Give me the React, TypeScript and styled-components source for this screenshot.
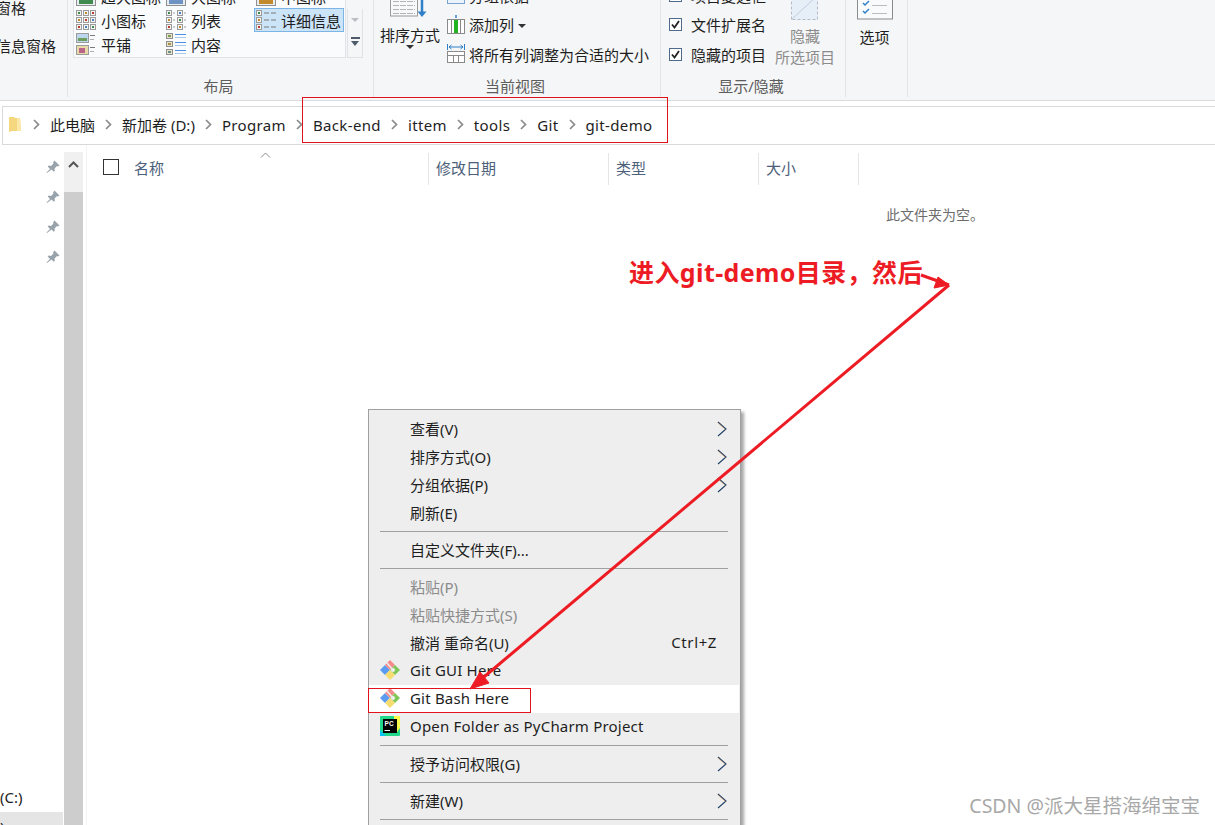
import styled, { createGlobalStyle } from 'styled-components';

const FONT = '"Noto Sans", "Noto Sans CJK SC", sans-serif';

const GlobalStyle = createGlobalStyle`
  html, body {
    margin: 0;
    padding: 0;
    background: #fff;
    overflow: hidden;
  }
  * {
    box-sizing: border-box;
  }
`;

const Thumb = ({ x, y, c = '#c0392b' }: { x: number; y: number; c?: string }) => (
  <>
    <rect x={x + 0.5} y={y + 0.5} width={5} height={5} fill="#f4f4f4" stroke="#9b9b9b" />
    <rect x={x + 2} y={y + 2} width={2} height={2} fill={c} />
  </>
);

const SmallIcon = () => (
  <svg width="20" height="20" viewBox="0 0 20 20">
    {[0, 7, 14].map((y, r) =>
      [0, 7, 14].map((x, i) => (
        <Thumb key={`${x}-${y}`} x={x} y={y} c={['#3d8a4a', '#c28a2c', '#c0392b', '#4a7fbf'][(r + i) % 4]} />
      )),
    )}
  </svg>
);

const ListIcon = () => (
  <svg width="20" height="20" viewBox="0 0 20 20">
    {[0, 7, 14].map((y, i) => (
      <g key={y}>
        <Thumb x={0} y={y} c={['#3d8a4a', '#c28a2c', '#c0392b'][i]} />
        <line x1="7" x2="9" y1={y + 3} y2={y + 3} stroke="#9b9b9b" />
        <Thumb x={11} y={y} c={['#4a7fbf', '#3d8a4a', '#c28a2c'][i]} />
        <line x1="18" x2="20" y1={y + 3} y2={y + 3} stroke="#9b9b9b" />
      </g>
    ))}
  </svg>
);

const DetailIcon = () => (
  <svg width="20" height="20" viewBox="0 0 20 20">
    {[0, 7, 14].map((y, i) => (
      <g key={y}>
        <Thumb x={0} y={y} c={['#3d8a4a', '#c28a2c', '#c0392b'][i]} />
        <line x1="8" x2="13" y1={y + 3} y2={y + 3} stroke="#7a7a7a" />
        <line x1="15" x2="20" y1={y + 3} y2={y + 3} stroke="#7a7a7a" />
      </g>
    ))}
  </svg>
);

const TileIcon = () => (
  <svg width="20" height="22" viewBox="0 0 20 22">
    <rect x="0.5" y="0.5" width="12" height="9" fill="#bcd6ee" stroke="#9b9b9b" />
    <rect x="2" y="5" width="9" height="3" fill="#6d9e5a" />
    <line x1="14" x2="19" y1="2.5" y2="2.5" stroke="#7a7a7a" />
    <line x1="14" x2="18" y1="6.5" y2="6.5" stroke="#b0b0b0" />
    <rect x="0.5" y="12.5" width="12" height="9" fill="#e8d9a8" stroke="#9b9b9b" />
    <rect x="3" y="15" width="6" height="5" fill="#b9658a" />
    <line x1="14" x2="19" y1="14.5" y2="14.5" stroke="#7a7a7a" />
    <line x1="14" x2="18" y1="18.5" y2="18.5" stroke="#b0b0b0" />
  </svg>
);

const ContentIcon = () => (
  <svg width="20" height="22" viewBox="0 0 20 22">
    {[0, 8, 16].map((y, i) => (
      <g key={y}>
        <rect x="0.5" y={y + 0.5} width="6" height="5" fill="#e9e5c9" stroke="#8f8f8f" />
        <rect x="2" y={y + 2} width="3" height="2" fill={['#7d9a5a', '#a88f4a', '#6a8f8a'][i]} />
        <line x1="9" x2="20" y1={y + 1.5} y2={y + 1.5} stroke="#4a90e2" />
        <line x1="9" x2="20" y1={y + 4.5} y2={y + 4.5} stroke="#a9c8ee" />
      </g>
    ))}
  </svg>
);

const ClippedPicture = ({ tone }: { tone: string }) => (
  <svg width="20" height="20" viewBox="0 0 20 20">
    <rect x="0.5" y="0.5" width="19" height="19" fill="#e8edf3" stroke="#8f8f8f" />
    <rect x="3" y="2" width="14" height="16" fill={tone} />
  </svg>
);

const AddColumnIcon = () => (
  <svg width="18" height="20" viewBox="0 0 18 20">
    <path d="M9 0v3" stroke="#2f7fc9" strokeWidth="1.5" />
    <rect x="0.5" y="4.5" width="17" height="14" fill="#fff" stroke="#8a8a8a" />
    <rect x="7" y="5" width="4" height="13" fill="#22b322" />
    <line x1="4.5" x2="4.5" y1="5" y2="18" stroke="#8a8a8a" />
    <line x1="13.5" x2="13.5" y1="5" y2="18" stroke="#8a8a8a" />
  </svg>
);

const FitColumnsIcon = () => (
  <svg width="18" height="20" viewBox="0 0 18 20">
    <path d="M2 3h14M2 3l2.500-2M2 3l2.500 2M16 3l-2.500-2M16 3l-2.500 2" stroke="#2f7fc9" fill="none" />
    <line x1="0.500" x2="0.500" y1="0" y2="6" stroke="#2f7fc9" />
    <line x1="17.500" x2="17.500" y1="0" y2="6" stroke="#2f7fc9" />
    <rect x="0.500" y="7.500" width="17" height="11" fill="#fff" stroke="#8a8a8a" />
    <line x1="0" x2="18" y1="11.500" y2="11.500" stroke="#8a8a8a" />
    <path d="M6.500 12v7M11.500 12v7" stroke="#8a8a8a" />
  </svg>
);

const GroupByIcon = () => (
  <svg width="18" height="20" viewBox="0 0 18 20">
    <rect x="0.500" y="4.500" width="17" height="14" fill="#eaf2fb" stroke="#7aa3d0" />
    <line x1="3" x2="15" y1="9.500" y2="9.500" stroke="#9a9a9a" />
    <line x1="3" x2="15" y1="13.500" y2="13.500" stroke="#9a9a9a" />
  </svg>
);

const SortIcon = () => (
  <svg width="40" height="26" viewBox="0 0 40 26">
    <rect x="0.500" y="0" width="27" height="22" fill="#f7f8f9" stroke="#9a9a9a" />
    {[3, 7, 11, 15, 19].map(y => (
      <line key={y} x1="3" x2="25" y1={y + 0.500} y2={y + 0.500} stroke="#b5b5b5" strokeDasharray="6 1" />
    ))}
    <path d="M32 0v19" stroke="#2f7fc9" strokeWidth="2.500" />
    <path d="M27.500 17.500h9L32 23z" fill="#2f7fc9" />
  </svg>
);

const HideIcon = () => (
  <svg width="28" height="24" viewBox="0 0 28 24">
    <path d="M0.500 23.500V0h26v23.500z" fill="#e6eef8" stroke="#b4bcc8" strokeDasharray="3 2" />
    <path d="M1 23L26 0" stroke="#c0cde0" />
  </svg>
);

const OptionsIcon = () => (
  <svg width="36" height="20" viewBox="0 0 36 20">
    <rect x="0.500" y="-4" width="35" height="23" fill="#f9fafb" stroke="#8a8a8a" />
    <path d="M6 3l2 2 4-4M6 11l2 2 4-4" stroke="#2f7fc9" strokeWidth="1.500" fill="none" />
    <line x1="15" x2="30" y1="5.500" y2="5.500" stroke="#bcbcbc" />
    <line x1="15" x2="30" y1="13.500" y2="13.500" stroke="#bcbcbc" />
  </svg>
);

const FolderIcon = () => (
  <svg width="13" height="16" viewBox="0 0 13 16">
    <path d="M0 0h5l1 1h5l1 13H3l-3 1z" fill="#f5d77f" />
    <path d="M8 1h3l1 13H8z" fill="#fbe7a6" />
  </svg>
);

const Crumb = () => (
  <svg width="7" height="11" viewBox="0 0 7 11">
    <path d="M1 1l4.500 4.500L1 10" stroke="#8a8a8a" strokeWidth="1.700" fill="none" />
  </svg>
);

const Pin = () => (
  <svg width="14" height="14" viewBox="0 0 14 14">
    <path d="M8.500 0.500l5 5-1.500 1-1-.5-2.500 2.500.3 2.300-1 1-2.300-2.300L1 13l-.5-.5 3.500-3.600L1.700 6.600l1-1 2.300.3 2.500-2.500-.5-1z" fill="#98a2ab" />
  </svg>
);

const MenuChevron = () => (
  <svg width="10" height="16" viewBox="0 0 10 16">
    <path d="M1 1l8 7-8 7" stroke="#1f3f66" strokeWidth="1.100" fill="none" />
    <path d="M0.500 1.500l8 7" stroke="#d98a3a" strokeWidth="0.500" fill="none" />
  </svg>
);

const GitIcon = () => (
  <svg width="20" height="20" viewBox="0 0 20 20">
    <path d="M0 10l5-5 5 5-5 5z" fill="#5b9bf0" />
    <path d="M5 5l5-5 5 5-5 5z" fill="#f58a8a" />
    <path d="M10 10l5-5 5 5-5 5z" fill="#7fc857" />
    <path d="M5 15l5-5 5 5-5 5z" fill="#f7dc6f" />
    <path d="M7 3l6 7" stroke="#eeeeee" strokeWidth="1.500" />
    <circle cx="13" cy="10" r="2" fill="#eeeeee" />
  </svg>
);

const PyCharmIcon = () => (
  <svg width="20" height="20" viewBox="0 0 20 20">
    <rect x="0" y="0" width="20" height="20" rx="1" fill="#21d789" />
    <path d="M14 0h6v12l-3 4-3-4z" fill="#fcf84a" />
    <path d="M0 14l6 6H0z" fill="#07c3f2" />
    <rect x="3" y="3" width="14" height="14" fill="#000" />
    <text x="4.500" y="10" fontSize="6.500" fontWeight="700" fill="#fff" fontFamily="Liberation Sans, sans-serif">
      PC
    </text>
    <line x1="4.500" x2="10" y1="14.500" y2="14.500" stroke="#fff" />
  </svg>
);

const Page = styled.div`
  position: relative;
  display: flex;
  flex-direction: column;
  width: 1215px;
  height: 825px;
  overflow: hidden;
  background: #fff;
  color: #1e1e1e;
  font-family: ${FONT};
  font-size: 15px;
`;

const Ribbon = styled.div`
  display: flex;
  flex: none;
  height: 101px;
  padding-bottom: 3px;
  background: #f5f6f7;
  border-bottom: 1px solid #dadbdc;
`;

const Group = styled.div<{ $width: number }>`
  display: flex;
  flex-direction: column;
  flex: none;
  width: ${p => p.$width}px;
  border-right: 1px solid #e2e3e5;
`;

const GroupBody = styled.div`
  display: flex;
  flex: 1;
  min-height: 0;
  align-items: flex-end;
  overflow: hidden;
`;

const GroupLabel = styled.div`
  flex: none;
  height: 22px;
  line-height: 22px;
  padding-right: 4px;
  text-align: center;
  color: #5d5d5d;
`;

const PaneColumn = styled.div`
  display: flex;
  flex-direction: column;
  align-items: flex-end;
  width: 56px;
  margin-bottom: 19px;
  gap: 19px;
  white-space: nowrap;
  line-height: 19px;
`;

const PaneTop = styled.span`
  margin-right: 30px;
`;

const Gallery = styled.div`
  display: flex;
  margin: 0 0 17px 5px;
`;

const GalleryGrid = styled.div`
  display: grid;
  grid-template-columns: repeat(3, 90px);
  grid-auto-rows: 24px;
  width: 273px;
  padding-bottom: 1px;
  background: #f9fbfd;
  border: 1px solid #dfe3e8;
  border-top: 0;
`;

const GalleryItem = styled.div<{ $selected?: boolean }>`
  display: flex;
  align-items: center;
  gap: 5px;
  padding-left: 2px;
  white-space: nowrap;
  background: ${p => (p.$selected ? '#cce4f7' : 'transparent')};
  outline: ${p => (p.$selected ? '1px solid #7db4e6' : 'none')};
  outline-offset: -1px;
`;

const GalleryScroll = styled.div`
  display: flex;
  flex-direction: column;
  width: 16px;
  height: 49px;
  align-self: flex-end;
  margin-left: 1px;
  border: 1px solid #dfe3e8;
  border-top: 0;
  align-items: center;
`;

const ScrollUp = styled.span`
  width: 0;
  height: 0;
  margin-top: 9px;
  border-left: 4px solid transparent;
  border-right: 4px solid transparent;
  border-top: 4px solid #b9bec4;
`;

const ScrollMore = styled.span`
  position: relative;
  width: 9px;
  height: 8px;
  margin-top: 15px;
  border-top: 2px solid #4e5b6b;
  &::after {
    content: '';
    position: absolute;
    left: 0;
    top: 2px;
    border-left: 4.500px solid transparent;
    border-right: 4.500px solid transparent;
    border-top: 5px solid #4e5b6b;
  }
`;

const BigButton = styled.div<{ $muted?: boolean }>`
  display: flex;
  flex-direction: column;
  align-items: center;
  flex: none;
  color: ${p => (p.$muted ? '#8c8c8c' : 'inherit')};
  line-height: 21px;
  white-space: nowrap;
`;

const SortButton = styled(BigButton)`
  width: 66px;
  margin: 0 0 26px 3px;
  gap: 5px;
`;

const Caret = styled.span`
  width: 0;
  height: 0;
  margin-top: 2px;
  border-left: 4px solid transparent;
  border-right: 4px solid transparent;
  border-top: 4px solid #333;
`;

const SortCaretMark = styled(Caret)`
  margin-top: -6px;
`;

const CommandList = styled.div<{ $left: number; $width?: number }>`
  display: flex;
  flex-direction: column;
  flex: none;
  width: ${p => (p.$width ? `${p.$width}px` : 'auto')};
  margin: 0 0 6px ${p => p.$left}px;
`;

const CommandRow = styled.div`
  display: flex;
  align-items: center;
  gap: 4px;
  height: 29.500px;
  white-space: nowrap;
`;

const CheckMark = styled.span`
  display: inline-flex;
  align-items: center;
  justify-content: center;
  flex: none;
  width: 13px;
  height: 13px;
  margin-right: 5px;
  background: #fff;
  border: 1px solid #4f6a8a;
`;

const HideButton = styled(BigButton)`
  width: 70px;
  margin: 0 0 7px 1px;
  gap: 0;
`;

const HideIconSlot = styled.div`
  margin-bottom: 1px;
`;

const OptionsButton = styled(BigButton)`
  width: 57px;
  margin-bottom: 27px;
  gap: 7px;
`;

const AddressRow = styled.div`
  flex: none;
  padding: 5px 0 0 2px;
`;

const AddressBar = styled.div`
  display: flex;
  align-items: center;
  gap: 10px;
  height: 39px;
  padding: 0 0 2px 6px;
  background: #fff;
  border: 1px solid #d9d9d9;
  border-right: 0;
  white-space: nowrap;
`;

const FolderSlot = styled.span`
  display: flex;
  margin-right: 1px;
`;

const CrumbText = styled.span<{ $latin: boolean }>`
  letter-spacing: ${p => (p.$latin ? '0.35px' : '0')};
`;

const Main = styled.div`
  display: flex;
  flex: 1;
  min-height: 0;
`;

const Sidebar = styled.div`
  display: flex;
  flex-direction: column;
  flex: none;
  width: 64px;
  padding-top: 7px;
  overflow: hidden;
`;

const PinRow = styled.div`
  display: flex;
  align-items: center;
  justify-content: flex-end;
  flex: none;
  height: 30px;
  padding-right: 4px;
`;

const DriveRow = styled.div<{ $selected?: boolean }>`
  flex: none;
  height: ${p => (p.$selected ? 13 : 30)}px;
  line-height: 30px;
  margin-top: ${p => (p.$selected ? 0 : 'auto')};
  margin-right: 1px;
  overflow: hidden;
  background: ${p => (p.$selected ? '#e5e5e5' : 'transparent')};
`;

const Scrollbar = styled.div`
  display: flex;
  flex-direction: column;
  flex: none;
  width: 19px;
  margin-top: 7px;
  background: #f0f0f0;
`;

const ScrollTop = styled.div`
  display: flex;
  justify-content: center;
  flex: none;
  height: 40px;
  padding-top: 9px;
`;

const ScrollThumb = styled.div`
  flex: 1;
  background: #cdcdcd;
`;

const ListPane = styled.div`
  flex: 1;
  margin-left: 3px;
  border-left: 1px solid #f2f2f2;
  padding-top: 8px;
`;

const Header = styled.div`
  display: flex;
  height: 32px;
  color: #4c607a;
`;

const HeaderCell = styled.div<{ $width: number }>`
  position: relative;
  display: flex;
  align-items: center;
  flex: none;
  width: ${p => p.$width}px;
  padding: 0 0 4px 7px;
  border-right: 1px solid #e5e5e5;
`;

const NameCell = styled(HeaderCell)`
  padding-left: 16px;
  gap: 15px;
`;

const HeaderCheck = styled.span`
  width: 16px;
  height: 16px;
  border: 1px solid #333;
`;

const SortCaret = styled.svg`
  position: absolute;
  left: 173px;
  top: -1px;
`;

const Empty = styled.div`
  margin-top: 20px;
  padding-left: 799px;
  line-height: 20px;
  font-size: 14px;
  color: #6d6d6d;
`;

const Menu = styled.div`
  position: absolute;
  left: 368px;
  top: 409px;
  width: 373px;
  height: 430px;
  padding-top: 5px;
  background: #eeeeee;
  border: 1px solid #a0a0a0;
  box-shadow: 3px 3px 3px rgba(0, 0, 0, 0.35);
`;

const MenuRow = styled.div<{ $disabled?: boolean; $active?: boolean; $latin?: boolean }>`
  display: flex;
  align-items: center;
  height: 28px;
  padding: 0 12px 2px 11px;
  margin-right: 1px;
  white-space: nowrap;
  letter-spacing: ${p => (p.$latin ? '0.2px' : '0')};
  color: ${p => (p.$disabled ? '#8b8b8b' : '#1e1e1e')};
  background: ${p => (p.$active ? '#fff' : 'transparent')};
`;

const MenuIcon = styled.span`
  display: flex;
  flex: none;
  width: 20px;
  margin-right: 10px;
`;

const Shortcut = styled.span`
  margin-left: auto;
  margin-right: 10px;
  letter-spacing: 0.6px;
`;

const MenuArrow = styled.span`
  display: flex;
  margin-top: 2px;
  margin-left: auto;
`;

const MenuSep = styled.div`
  height: 1px;
  margin: 4px 12px 4px 11px;
  background: #a0a0a0;
`;

const RedBox = styled.div<{ $x: number; $y: number; $w: number; $h: number }>`
  position: absolute;
  left: ${p => p.$x}px;
  top: ${p => p.$y}px;
  width: ${p => p.$w}px;
  height: ${p => p.$h}px;
  border: 1px solid #e0121c;
  pointer-events: none;
`;

const Callout = styled.div`
  position: absolute;
  left: 629px;
  top: 254px;
  line-height: 36px;
  font-size: 25px;
  font-weight: 700;
  letter-spacing: 0.4px;
  color: #ed1c24;
  white-space: nowrap;
`;

const ArrowLayer = styled.svg`
  position: absolute;
  inset: 0;
  pointer-events: none;
`;

const Watermark = styled.div`
  position: absolute;
  right: 15px;
  bottom: 6px;
  font-size: 19.500px;
  line-height: 26px;
  color: #a8a8a8;
  white-space: nowrap;
`;

const crumbs = ['此电脑', '新加卷 (D:)', 'Program', 'Back-end', 'ittem', 'tools', 'Git', 'git-demo'];

const App = () => {
  return (
    <Page>
      <GlobalStyle />
      <Ribbon>
        <Group $width={68}>
          <GroupBody>
            <PaneColumn>
              <PaneTop>窗格</PaneTop>
              <span>信息窗格</span>
            </PaneColumn>
          </GroupBody>
          <GroupLabel>&nbsp;</GroupLabel>
        </Group>

        <Group $width={306}>
          <GroupBody>
            <Gallery>
              <GalleryGrid>
                <GalleryItem><ClippedPicture tone="#3f8a4d" />超大图标</GalleryItem>
                <GalleryItem><ClippedPicture tone="#6f94c4" />大图标</GalleryItem>
                <GalleryItem><ClippedPicture tone="#c28a2c" />中图标</GalleryItem>
                <GalleryItem><SmallIcon />小图标</GalleryItem>
                <GalleryItem><ListIcon />列表</GalleryItem>
                <GalleryItem $selected><DetailIcon />详细信息</GalleryItem>
                <GalleryItem><TileIcon />平铺</GalleryItem>
                <GalleryItem><ContentIcon />内容</GalleryItem>
              </GalleryGrid>
              <GalleryScroll>
                <ScrollUp />
                <ScrollMore />
              </GalleryScroll>
            </Gallery>
          </GroupBody>
          <GroupLabel>布局</GroupLabel>
        </Group>

        <Group $width={287}>
          <GroupBody>
            <SortButton>
              <SortIcon />
              <span>排序方式</span>
              <SortCaretMark />
            </SortButton>
            <CommandList $left={4}>
              <CommandRow><GroupByIcon />分组依据</CommandRow>
              <CommandRow><AddColumnIcon />添加列<Caret /></CommandRow>
              <CommandRow><FitColumnsIcon />将所有列调整为合适的大小</CommandRow>
            </CommandList>
          </GroupBody>
          <GroupLabel>当前视图</GroupLabel>
        </Group>

        <Group $width={185}>
          <GroupBody>
            <CommandList $left={8} $width={100}>
              <CommandRow>
                <CheckMark><Tick /></CheckMark>项目复选框
              </CommandRow>
              <CommandRow>
                <CheckMark><Tick /></CheckMark>文件扩展名
              </CommandRow>
              <CommandRow>
                <CheckMark><Tick /></CheckMark>隐藏的项目
              </CommandRow>
            </CommandList>
            <HideButton $muted>
              <HideIconSlot><HideIcon /></HideIconSlot>
              <span>隐藏</span>
              <span>所选项目</span>
            </HideButton>
          </GroupBody>
          <GroupLabel>显示/隐藏</GroupLabel>
        </Group>

        <Group $width={62}>
          <GroupBody>
            <OptionsButton>
              <OptionsIcon />
              <span>选项</span>
            </OptionsButton>
          </GroupBody>
          <GroupLabel>&nbsp;</GroupLabel>
        </Group>
      </Ribbon>

      <AddressRow>
        <AddressBar>
          <FolderSlot><FolderIcon /></FolderSlot>
          {crumbs.map((c, i) => (
            <Breadcrumb key={c} label={c} latin={i > 1} />
          ))}
        </AddressBar>
      </AddressRow>

      <Main>
        <Sidebar>
          {[0, 1, 2, 3].map(i => (
            <PinRow key={i}><Pin /></PinRow>
          ))}
          <DriveRow>(C:)</DriveRow>
          <DriveRow $selected>)</DriveRow>
        </Sidebar>
        <Scrollbar>
          <ScrollTop>
            <svg width="11" height="7" viewBox="0 0 11 7">
              <path d="M1 6l4.500-4.500L10 6" stroke="#555" strokeWidth="2" fill="none" />
            </svg>
          </ScrollTop>
          <ScrollThumb />
        </Scrollbar>
        <ListPane>
          <Header>
            <NameCell $width={342}>
              <HeaderCheck />
              名称
              <SortCaret width="11" height="6" viewBox="0 0 11 6">
                <path d="M1 5.500l4.500-4.500L10 5.500" stroke="#8a8a8a" fill="none" />
              </SortCaret>
            </NameCell>
            <HeaderCell $width={180}>修改日期</HeaderCell>
            <HeaderCell $width={150}>类型</HeaderCell>
            <HeaderCell $width={100}>大小</HeaderCell>
          </Header>
          <Empty>此文件夹为空。</Empty>
        </ListPane>
      </Main>

      <Menu>
        <MenuRow><MenuIcon />查看(V)<MenuArrow><MenuChevron /></MenuArrow></MenuRow>
        <MenuRow><MenuIcon />排序方式(O)<MenuArrow><MenuChevron /></MenuArrow></MenuRow>
        <MenuRow><MenuIcon />分组依据(P)<MenuArrow><MenuChevron /></MenuArrow></MenuRow>
        <MenuRow><MenuIcon />刷新(E)</MenuRow>
        <MenuSep />
        <MenuRow><MenuIcon />自定义文件夹(F)...</MenuRow>
        <MenuSep />
        <MenuRow $disabled><MenuIcon />粘贴(P)</MenuRow>
        <MenuRow $disabled><MenuIcon />粘贴快捷方式(S)</MenuRow>
        <MenuRow><MenuIcon />撤消 重命名(U)<Shortcut>Ctrl+Z</Shortcut></MenuRow>
        <MenuRow $latin><MenuIcon><GitIcon /></MenuIcon>Git GUI Here</MenuRow>
        <MenuRow $latin $active><MenuIcon><GitIcon /></MenuIcon>Git Bash Here</MenuRow>
        <MenuRow $latin><MenuIcon><PyCharmIcon /></MenuIcon>Open Folder as PyCharm Project</MenuRow>
        <MenuSep />
        <MenuRow><MenuIcon />授予访问权限(G)<MenuArrow><MenuChevron /></MenuArrow></MenuRow>
        <MenuSep />
        <MenuRow><MenuIcon />新建(W)<MenuArrow><MenuChevron /></MenuArrow></MenuRow>
        <MenuSep />
      </Menu>

      <RedBox $x={302} $y={97} $w={366} $h={46} />
      <RedBox $x={368} $y={688} $w={163} $h={25} />
      <Callout>进入git-demo目录，然后</Callout>
      <ArrowLayer width="1215" height="825" viewBox="0 0 1215 825">
        <path d="M921 275L949 285" stroke="#ed1c24" strokeWidth="3" fill="none" />
        <path d="M949 285L934 288L938 277z" fill="#ed1c24" stroke="#ed1c24" />
        <path d="M949 285L478 682" stroke="#ed1c24" strokeWidth="3" fill="none" />
        <path d="M470 689L480 672L489 683z" fill="#ed1c24" stroke="#ed1c24" />
      </ArrowLayer>
      <Watermark>CSDN @派大星搭海绵宝宝</Watermark>
    </Page>
  );
};

function Tick() {
  return (
    <svg width="11" height="11" viewBox="0 0 11 11">
      <path d="M2 5.500l2.500 3L9 2" stroke="#222" strokeWidth="1.800" fill="none" />
    </svg>
  );
}

function Breadcrumb({ label, latin }: { label: string; latin: boolean }) {
  return (
    <>
      <Crumb />
      <CrumbText $latin={latin}>{label}</CrumbText>
    </>
  );
}

export default App;
